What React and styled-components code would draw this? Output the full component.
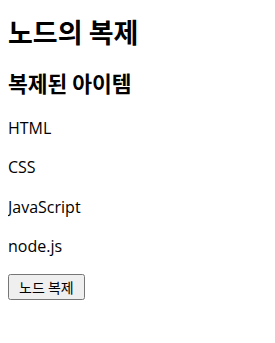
import React from 'react';
import styled, { createGlobalStyle } from 'styled-components';

const GlobalStyle = createGlobalStyle`
    body {
        margin: 8px;
        font-family: "Open Sans", "Noto Sans CJK KR", sans-serif;
        color: #000;
        background: #fff;
    }
`;

const Title = styled.h1`
    font-family: "Noto Sans CJK KR", sans-serif;
    font-size: 27px;
    line-height: 30.8px;
    font-weight: bold;
    margin: 9px 0 21.4px;
`;

const Subtitle = styled.h2`
    font-family: "Noto Sans CJK KR", sans-serif;
    font-size: 21.5px;
    line-height: 28px;
    font-weight: bold;
    margin: 20px 0;
`;

const Item = styled.p`
    font-size: 16px;
    line-height: 23.3px;
    margin: 16px 0;
`;

const CloneButton = styled.button`
    font-family: "Noto Sans CJK KR", sans-serif;
    font-size: 14px;
    line-height: 20px;
    padding: 1px 9px;
    color: #000;
`;

const items = ['HTML', 'CSS', 'JavaScript', 'node.js'];

const App = () => {
    return (
        <>
            <GlobalStyle />
            <Title>노드의 복제</Title>
            <Subtitle>복제된 아이템</Subtitle>
            {items.map((item) => (
                <Item key={item}>{item}</Item>
            ))}
            <CloneButton>노드 복제</CloneButton>
        </>
    );
};

export default App;
